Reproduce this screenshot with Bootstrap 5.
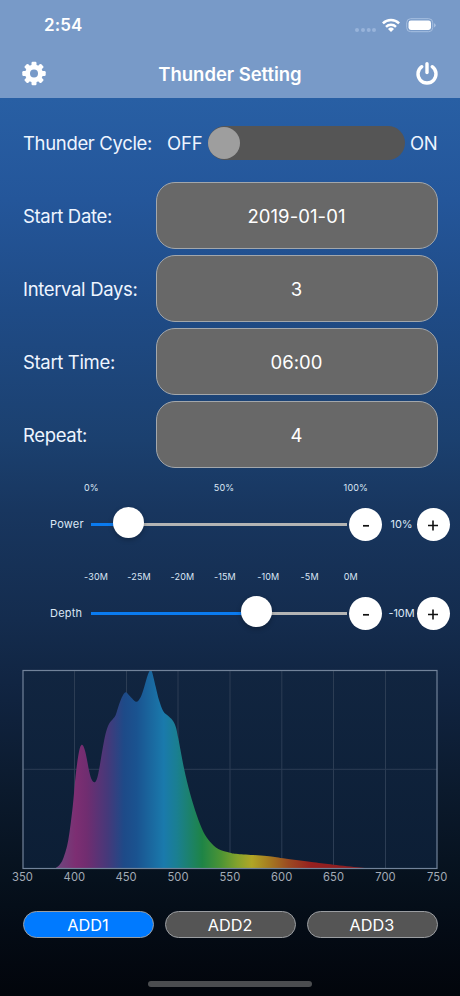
<!DOCTYPE html>
<html lang="en">
<head>
<meta charset="utf-8">
<meta name="viewport" content="width=device-width, initial-scale=1">
<title>Thunder Setting</title>
<link href="https://cdn.jsdelivr.net/npm/bootstrap@5.3.0/dist/css/bootstrap.min.css" rel="stylesheet">
<style>
body{font-family:Inter,"Liberation Sans",sans-serif;color:#eef5ff;width:460px;height:996px;overflow:hidden;
background:linear-gradient(180deg,#285fa4 98px,#24569a 200px,#1f4b86 310px,#1b406f 440px,#18365f 510px,#142c4e 620px,#10233f 700px,#0b1a2d 790px,#06111d 880px,#040b15 930px,#02050b 996px)}
.app-top{height:98px;background:#789ac8;color:#fff}
.status{height:50px;padding:0 24px 0 44px}
.clock{font-size:17px;font-weight:600;letter-spacing:.1px;width:60px;padding-top:2px}
.titlebar{height:48px;padding:0 21px}
.titlebar h1{font-size:18.5px;font-weight:600;letter-spacing:-.04px}
.form-area{padding:28px 22.5px 0 23px}
.lbl{font-size:18.5px;letter-spacing:-.34px;white-space:nowrap}
.cycle{height:34px;margin-bottom:22px}
.cycle span,.set-row .name{padding-top:2px}
.cycle .name{width:144px}
.cycle .off{width:41px;letter-spacing:-.16px}
.track{width:197px;height:34px;background:#555;margin-right:5px}
.knob{width:32px;height:32px;background:#9e9e9e}
.set-row{height:67px;margin-bottom:6px}
.set-row .name{width:132.5px}
.field{border:1px solid #a3a7ab;border-radius:19px;background:#686868;color:#fff;font-size:18.5px;letter-spacing:.08px;padding-top:2px}
.sliders{padding:8px 0 0 50px}
.ticks{height:12px;margin-left:34px;font-size:9px;line-height:12px;letter-spacing:.15px;color:#dbe7f5}
.ticks span{width:43.3px;flex:none;white-space:nowrap}
.ticks.pct span{width:129.8px}
.slide{height:34px;margin-top:13.5px;font-size:11px;color:#dbe7f5}
.slide .name{width:41px;letter-spacing:.2px}
.rail{width:256px;height:2.5px;background:#b3b4b4;margin-right:2px}
.rail .fill{height:100%;background:#0a7bf0;flex:none}
.rail .thumb{width:31px;height:31px;background:#fff;margin:-16px 0 0 -15px;box-shadow:0 2px 5px rgba(0,0,0,.25);flex:none}
.step{width:33px;height:33px;background:#fff;flex:none}
.val{width:34.5px;white-space:nowrap;letter-spacing:-.05px;padding-left:4.5px}
#power{margin-bottom:29.5px}
.add{height:27px;border:1px solid #9a9da1;background:#555;color:#fff;font-size:16.3px;letter-spacing:0;flex:1;padding-top:1px}
.add.on{background:#007aff}
.adds{gap:11px;padding:21px 22.5px 43px}
.home{width:164px;height:6px;background:#4b4d50;margin-bottom:9px}
</style>
<script src="https://cdn.jsdelivr.net/npm/bootstrap@5.3.0/dist/js/bootstrap.bundle.min.js"></script>
</head>
<body class="d-flex flex-column">
<header class="app-top">
  <div class="status d-flex align-items-center justify-content-between">
    <span class="clock">2:54</span>
    <svg width="82" height="20" viewBox="354 15 82 20">
      <g fill="#98b3da"><circle cx="357" cy="30" r="2"/><circle cx="363" cy="30" r="2"/><circle cx="368.7" cy="30" r="2"/><circle cx="374" cy="30" r="2"/></g>
      <g fill="none" stroke="#fff" stroke-width="2.5"><path d="M382.9 23.4a11.6 11.6 0 0 1 16.2 0"/><path d="M386 26.8a7.2 7.2 0 0 1 10 0"/></g>
      <path d="M388 29a4.4 4.4 0 0 1 6 0l-3 3z" fill="#fff"/>
      <rect x="406.7" y="18.7" width="26" height="13" rx="4" fill="none" stroke="#a7bfe0" stroke-width="1"/>
      <rect x="408.5" y="20.5" width="22.5" height="9.5" rx="2.4" fill="#fff"/>
      <path d="M434 23.2q1.7.6 1.7 2.1t-1.7 2.1z" fill="#a7bfe0"/>
    </svg>
  </div>
  <div class="titlebar d-flex align-items-center justify-content-between">
    <svg width="26" height="26" viewBox="-13 -12.5 26 26">
      <g fill="#fff"><g id="teeth"><rect x="-2.5" y="-11.7" width="5" height="23.4" rx="1.2"/><rect x="-11.7" y="-2.5" width="23.4" height="5" rx="1.2"/></g><use href="#teeth" transform="rotate(45)"/></g>
      <circle r="6.4" fill="none" stroke="#fff" stroke-width="5"/><circle r="4" fill="#789ac8"/>
    </svg>
    <h1 class="mb-0">Thunder Setting</h1>
    <svg width="26" height="26" viewBox="-14 -13 26 26" fill="none" stroke="#fff" stroke-width="3.4">
      <path d="M-5.2 -7.3A9 9 0 1 0 5.2 -7.3" stroke-linecap="round"/><path d="M0 -10.3v8.8" stroke-linecap="round"/>
    </svg>
  </div>
</header>

<main class="form-area">
  <div class="cycle d-flex align-items-center lbl">
    <span class="name">Thunder Cycle:</span><span class="off">OFF</span>
    <div class="track rounded-pill d-flex align-items-center"><div class="knob rounded-circle"></div></div>
    <span>ON</span>
  </div>
  <div class="set-row d-flex align-items-center"><span class="name lbl">Start Date:</span><div class="field flex-fill h-100 d-flex align-items-center justify-content-center">2019-01-01</div></div>
  <div class="set-row d-flex align-items-center"><span class="name lbl">Interval Days:</span><div class="field flex-fill h-100 d-flex align-items-center justify-content-center">3</div></div>
  <div class="set-row d-flex align-items-center"><span class="name lbl">Start Time:</span><div class="field flex-fill h-100 d-flex align-items-center justify-content-center">06:00</div></div>
  <div class="set-row d-flex align-items-center"><span class="name lbl">Repeat:</span><div class="field flex-fill h-100 d-flex align-items-center justify-content-center">4</div></div>
</main>

<section class="sliders">
  <div class="ticks pct d-flex"><span>0%</span><span>50%</span><span>100%</span></div>
  <div class="slide d-flex align-items-center" id="power">
    <span class="name">Power</span>
    <div class="rail d-flex"><div class="fill" style="width:14.5%"></div><div class="thumb rounded-circle"></div></div>
    <div class="step rounded-circle d-flex align-items-center justify-content-center"><svg width="12" height="12"><path d="M3 6.8h6" stroke="#111" stroke-width="1.7"/></svg></div>
    <span class="val text-center">10%</span>
    <div class="step rounded-circle d-flex align-items-center justify-content-center"><svg width="12" height="12"><path d="M1 6.5h10M6 1.5v10" stroke="#111" stroke-width="1.6"/></svg></div>
  </div>
  <div class="ticks d-flex"><span>-30M</span><span>-25M</span><span>-20M</span><span>-15M</span><span>-10M</span><span>-5M</span><span>0M</span></div>
  <div class="slide d-flex align-items-center" id="depth">
    <span class="name">Depth</span>
    <div class="rail d-flex"><div class="fill" style="width:64.3%"></div><div class="thumb rounded-circle"></div></div>
    <div class="step rounded-circle d-flex align-items-center justify-content-center"><svg width="12" height="12"><path d="M3 6.8h6" stroke="#111" stroke-width="1.7"/></svg></div>
    <span class="val text-center">-10M</span>
    <div class="step rounded-circle d-flex align-items-center justify-content-center"><svg width="12" height="12"><path d="M1 6.5h10M6 1.5v10" stroke="#111" stroke-width="1.6"/></svg></div>
  </div>
</section>

<div class="mt-auto">
  <svg class="d-block" width="460" height="230" viewBox="0 660 460 230" id="chart">
    <defs>
      <linearGradient id="spectrum" gradientUnits="userSpaceOnUse" x1="55" y1="0" x2="375" y2="0">
        <stop offset="0" stop-color="#6b4a80"/><stop offset=".065" stop-color="#7d2e72"/><stop offset=".1" stop-color="#702d70"/>
        <stop offset=".165" stop-color="#45397a"/><stop offset=".215" stop-color="#1e4a88"/><stop offset=".255" stop-color="#1a5390"/>
        <stop offset=".34" stop-color="#1a7aac"/><stop offset=".38" stop-color="#1a7f92"/><stop offset=".46" stop-color="#1e8446"/>
        <stop offset=".52" stop-color="#4d9434"/><stop offset=".57" stop-color="#84a32c"/><stop offset=".615" stop-color="#b0a626"/>
        <stop offset=".67" stop-color="#a57b21"/><stop offset=".73" stop-color="#9b4a21"/><stop offset=".8" stop-color="#96201f"/><stop offset="1" stop-color="#861a24"/>
      </linearGradient>
      <linearGradient id="panel" x1="0" y1="0" x2="0" y2="1"><stop offset="0" stop-color="#112540"/><stop offset="1" stop-color="#0c1e35"/></linearGradient>
    </defs>
    <rect x="23" y="670.5" width="414" height="198" fill="url(#panel)"/>
    <path d="M74.5 671v197M126.5 671v197M178 671v197M230 671v197M281.8 671v197M333.5 671v197M385.5 671v197M23 769.3h414" stroke="#2c3d54"/>
    <path id="curve" fill="url(#spectrum)"/>
    <rect x="23" y="670.5" width="414" height="198" fill="none" stroke="#72839a" stroke-width="1.2"/>
    <g fill="#a3abb6" font-size="11.2" text-anchor="middle" letter-spacing=".1">
      <text x="22.5" y="881">350</text><text x="74.4" y="881">400</text><text x="126.1" y="881">450</text><text x="178" y="881">500</text><text x="229.9" y="881">550</text><text x="281.7" y="881">600</text><text x="333.6" y="881">650</text><text x="385.5" y="881">700</text><text x="437.2" y="881">750</text>
    </g>
  </svg>
  <div class="d-flex adds"><div class="add on rounded-pill d-flex align-items-center justify-content-center">ADD1</div><div class="add rounded-pill d-flex align-items-center justify-content-center">ADD2</div><div class="add rounded-pill d-flex align-items-center justify-content-center">ADD3</div></div>
  <div class="home rounded-pill mx-auto"></div>
</div>
<script>
// Spectral intensity samples, joined by a smooth Catmull-Rom curve
const pts=[[55,868.3],[59,865.5],[63.3,858.3],[68.3,840],[72.7,806.7],[75.7,775],[79,751.7],[82,744.7],[85.3,751.7],[89.3,771.7],[91.7,779.5],[94.3,782.3],[96.7,779.5],[99,770],[102.7,748.3],[105.7,733.3],[109,724],[112.7,719.3],[115.7,715],[119.3,703.8],[122.7,695.7],[126,692.3],[130,696.2],[136,701.7],[140,698.3],[143.3,690],[146.7,678.3],[149,672],[150.7,670.5],[152.3,672.7],[155.7,686.7],[159,700],[163.3,711.2],[168.3,716],[172.3,720],[175.7,726.7],[178.3,738.3],[184,768.3],[190,793.3],[196.7,815],[203.3,831.7],[210,841.7],[218.3,849],[230,852.7],[238,854],[266.7,856],[283.3,858.3],[313.3,862.3],[333.3,864.7],[360,867.5],[375,868.4]];
let d='M'+pts[0];
for(let i=0;i<pts.length-1;i++){
  const a=pts[i-1]||pts[i],b=pts[i],c=pts[i+1],e=pts[i+2]||c;
  d+=`C${b[0]+(c[0]-a[0])/6} ${b[1]+(c[1]-a[1])/6} ${c[0]-(e[0]-b[0])/6} ${c[1]-(e[1]-b[1])/6} ${c[0]} ${c[1]}`;
}
document.getElementById('curve').setAttribute('d',d+'Z');
</script>
</body>
</html>
